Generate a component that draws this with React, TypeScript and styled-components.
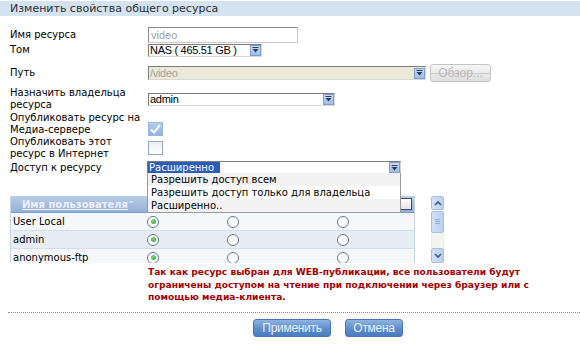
import styled, { createGlobalStyle } from "styled-components";

const GlobalStyle = createGlobalStyle`
  body {
    margin: 0;
    background: #ffffff;
    font-family: "DejaVu Sans", Verdana, sans-serif;
  }
`;

const Page = styled.div`
  width: 580px;
  height: 347px;
  overflow: hidden;
`;

const TitleBar = styled.div`
  margin-top: 1px;
  height: 15px;
  padding-left: 10px;
  background: #d4e3ef;
  font-size: 11px;
  line-height: 15px;
  color: #2e2e2e;
`;

const Form = styled.div`
  margin-top: 10px;
  padding-left: 10px;
`;

const Row = styled.div<{ $h: number; $mt?: number; $align?: string }>`
  display: flex;
  align-items: ${(p) => p.$align || "center"};
  height: ${(p) => p.$h}px;
  margin-top: ${(p) => p.$mt || 0}px;
`;

const Label = styled.div`
  width: 138px;
  flex: none;
  font-size: 10px;
  line-height: 12px;
  color: #000000;
`;

const TextInput = styled.div<{ $w: number }>`
  box-sizing: border-box;
  width: ${(p) => p.$w}px;
  height: 16px;
  padding-left: 2px;
  border: 1px solid #c8c8c8;
  border-top-color: #8a8a8a;
  border-left-color: #8a8a8a;
  font-family: "Liberation Sans", Arial, sans-serif;
  font-size: 11px;
  line-height: 14px;
  color: #a0a0a0;
`;

const SelectBox = styled.div<{ $w: number; $h?: number; $bg?: string; $mute?: boolean }>`
  position: relative;
  box-sizing: border-box;
  display: flex;
  align-items: center;
  width: ${(p) => p.$w}px;
  height: ${(p) => p.$h || 14}px;
  border: 1px solid #d8d8d8;
  border-top-color: #7c7c7c;
  border-left-color: #7c7c7c;
  background: ${(p) => p.$bg || "#ffffff"};
  font-family: "Liberation Sans", Arial, sans-serif;
  font-size: 11px;
  color: ${(p) => (p.$mute ? "#a0a0a0" : "#000000")};
`;

const SelectText = styled.span`
  flex: 1;
  padding-left: 1px;
  white-space: nowrap;
  overflow: hidden;
  letter-spacing: -0.3px;
`;

const ArrowBtn = styled.span`
  flex: none;
  box-sizing: border-box;
  width: 11px;
  height: 11px;
  display: flex;
  align-items: center;
  justify-content: center;
  background: linear-gradient(#c9dbf3, #9fbde6);
  border: 1px solid #7d9dcb;
`;

const Arrow = () => (
  <ArrowBtn>
    <svg width="7" height="6" viewBox="0 0 7 6">
      <rect x="0.5" y="0" width="6" height="1" fill="#2b3d5c" />
      <path d="M0.5 2 L6.5 2 L3.5 5.5 Z" fill="#2b3d5c" />
    </svg>
  </ArrowBtn>
);

const BrowseBtn = styled.div`
  box-sizing: border-box;
  width: 61px;
  height: 18px;
  margin-left: 4px;
  border: 1px solid #c4c4c4;
  border-radius: 3px;
  background: linear-gradient(
      transparent 8px,
      #c9c9c9 8px,
      #c9c9c9 9px,
      transparent 9px
    ),
    linear-gradient(#f6f6f6, #dedede);
  font-family: "Liberation Sans", Arial, sans-serif;
  font-size: 12px;
  line-height: 16px;
  text-align: center;
  color: #b8b8b8;
`;

const Check = styled.div<{ $on?: boolean }>`
  box-sizing: border-box;
  width: 15px;
  height: 14px;
  display: flex;
  align-items: center;
  justify-content: center;
  border: 1px solid ${(p) => (p.$on ? "#9db8e0" : "#90a8cb")};
  background: ${(p) =>
    p.$on ? "linear-gradient(#b3ccee, #90b2e2)" : "linear-gradient(#efefef, #ffffff)"};
`;

const AccessSelect = styled.div`
  position: relative;
  box-sizing: border-box;
  display: flex;
  align-items: center;
  width: 254px;
  height: 13px;
  margin-left: -1px;
  border: 1px solid #d0d0d0;
  border-top-color: #7c7c7c;
  border-left-color: #7c7c7c;
  background: #ffffff;
  font-size: 10px;
`;

const Highlight = styled.span`
  flex: none;
  padding: 0 6px 0 1px;
  line-height: 11px;
  background: #2a5cbb;
  color: #ffffff;
`;

const Spacer = styled.span`
  flex: 1;
`;

const DropList = styled.div`
  position: absolute;
  top: 11px;
  left: -1px;
  width: 254px;
  box-sizing: border-box;
  border: 1px solid #9a9a9a;
  border-top: none;
  background: #ffffff;
  z-index: 5;
`;

const DropItem = styled.div<{ $alt?: boolean }>`
  height: 13px;
  padding-left: 3px;
  font-size: 10px;
  line-height: 13px;
  color: #000000;
  background: ${(p) => (p.$alt ? "#f2f2f2" : "#ffffff")};
  white-space: nowrap;
`;

const TableArea = styled.div`
  display: flex;
  margin-top: 22px;
  padding-left: 10px;
  height: 67px;
`;

const Viewport = styled.div`
  width: 405px;
  height: 67px;
  overflow: hidden;
  border-left: 1px solid #c6d3e2;
  border-right: 1px solid #c6d3e2;
  box-sizing: border-box;
`;

const Grid = styled.div`
  display: grid;
  grid-template-columns: 129px 80px 110px 1fr;
`;

const HeadCell = styled.div`
  height: 16px;
  display: flex;
  align-items: center;
  padding-left: 11px;
  background: linear-gradient(#b9cde6, #93b1d6);
  border-bottom: 1px solid #7d9cc5;
  font-size: 10px;
  font-weight: bold;
  color: #eef0fb;
  white-space: nowrap;
  overflow: hidden;
  position: relative;

  a {
    color: inherit;
    text-decoration: underline;
  }
  sup {
    font-size: 7px;
  }
`;

/* column titles sit under the open drop-down: only their underline shows */
const HeadLine = styled.span<{ $w: number }>`
  align-self: flex-end;
  margin-bottom: 2px;
  width: ${(p) => p.$w}px;
  border-bottom: 1px dashed #eef0fb;
`;

const HeadBox = styled.span`
  position: absolute;
  right: 2px;
  top: 2px;
  width: 12px;
  height: 12px;
  box-sizing: border-box;
  border: 1px solid #3f4a5a;
  background: linear-gradient(#ffffff, #e4e4e4);
`;

const Cell = styled.div<{ $alt?: boolean; $radio?: boolean }>`
  height: 18px;
  box-sizing: border-box;
  display: flex;
  align-items: center;
  padding-left: ${(p) => (p.$radio ? "7px" : "2px")};
  background: ${(p) => (p.$alt ? "#e7edf4" : "#f5f8fb")};
  border-bottom: 1px solid #d4dde8;
  font-size: 10px;
  color: #000000;
  white-space: nowrap;
`;

const Radio = styled.span<{ $on?: boolean }>`
  width: 12px;
  height: 12px;
  box-sizing: border-box;
  border-radius: 50%;
  border: 1.5px solid #56799f;
  background: #ffffff;
  display: flex;
  align-items: center;
  justify-content: center;

  &::after {
    content: "";
    display: ${(p) => (p.$on ? "block" : "none")};
    width: 5px;
    height: 5px;
    border-radius: 50%;
    background: radial-gradient(circle at 40% 40%, #7fdb6f, #26a32a);
  }
`;

const ScrollBar = styled.div`
  display: flex;
  flex-direction: column;
  width: 13px;
  margin-left: 16px;
  height: 67px;
`;

const ScrollBtn = styled.div<{ $h: number }>`
  box-sizing: border-box;
  height: ${(p) => p.$h}px;
  display: flex;
  align-items: center;
  justify-content: center;
  border: 1px solid #a7c0e2;
  border-radius: 2px;
  background: linear-gradient(90deg, #d3e2f7, #b9d0f0);
`;

const Thumb = styled(ScrollBtn)`
  margin-top: 1px;
`;

const Track = styled.div`
  flex: 1;
  background: #f4f4f2;
  border-left: 1px solid #ececec;
  border-right: 1px solid #ececec;
`;

const Note = styled.div`
  margin: 3px 0 0 148px;
  font-size: 9.1px;
  font-weight: bold;
  line-height: 12.5px;
  color: #a50000;
  white-space: nowrap;
`;

const Divider = styled.div`
  margin: 8px 0 0 8px;
  border-top: 1px dotted #8c8c8c;
`;

const Buttons = styled.div`
  display: flex;
  gap: 14px;
  margin-top: 6px;
  padding-left: 253px;
`;

const Btn = styled.div<{ $w: number }>`
  box-sizing: border-box;
  width: ${(p) => p.$w}px;
  height: 18px;
  border: 1px solid #4a77b3;
  border-radius: 3px;
  background: linear-gradient(#8fb3e2, #5d8ccb 55%, #4a7cc0);
  font-family: "Liberation Sans", Arial, sans-serif;
  font-size: 12px;
  line-height: 16px;
  letter-spacing: -0.3px;
  text-align: center;
  color: #e9f0fb;
`;

const users = [
  { name: "User Local", alt: false },
  { name: "admin", alt: true },
  { name: "anonymous-ftp", alt: false },
];

export default function App() {
  return (
    <Page>
      <GlobalStyle />
      <TitleBar>Изменить свойства общего ресурса</TitleBar>
      <Form>
        <Row $h={17}>
          <Label>Имя ресурса</Label>
          <TextInput $w={150}>video</TextInput>
        </Row>
        <Row $h={14}>
          <Label>Том</Label>
          <SelectBox $w={114} $h={13}>
            <SelectText>NAS ( 465.51 GB )</SelectText>
            <Arrow />
          </SelectBox>
        </Row>
        <Row $h={22} $mt={5}>
          <Label>Путь</Label>
          <SelectBox $w={278} $bg="#ece9d8" $mute>
            <SelectText>/video</SelectText>
            <Arrow />
          </SelectBox>
          <BrowseBtn>Обзор...</BrowseBtn>
        </Row>
        <Row $h={26} $mt={2}>
          <Label>
            Назначить владельца
            <br />
            ресурса
          </Label>
          <SelectBox $w={187} $h={13}>
            <SelectText>admin</SelectText>
            <Arrow />
          </SelectBox>
        </Row>
        <Row $h={24} $align="flex-end">
          <Label>
            Опубликовать ресурс на
            <br />
            Медиа-сервере
          </Label>
          <Check $on>
            <svg width="11" height="10" viewBox="0 0 11 10">
              <path d="M1 5.5 L4 8.5 L10 1" stroke="#ffffff" strokeWidth="2" fill="none" />
            </svg>
          </Check>
        </Row>
        <Row $h={24}>
          <Label>
            Опубликовать этот
            <br />
            ресурс в Интернет
          </Label>
          <Check />
        </Row>
        <Row $h={13} $mt={1}>
          <Label>Доступ к ресурсу</Label>
          <AccessSelect>
            <Highlight>Расширенно</Highlight>
            <Spacer />
            <Arrow />
            <DropList>
              <DropItem $alt>Разрешить доступ всем</DropItem>
              <DropItem>Разрешить доступ только для владельца</DropItem>
              <DropItem $alt>Расширенно..</DropItem>
            </DropList>
          </AccessSelect>
        </Row>
      </Form>
      <TableArea>
        <Viewport>
          <Grid>
            <HeadCell>
              <a>Имя пользователя</a>
              <sup>^</sup>
            </HeadCell>
            <HeadCell>
              <HeadLine $w={55} />
            </HeadCell>
            <HeadCell>
              <HeadLine $w={65} />
            </HeadCell>
            <HeadCell>
              <HeadLine $w={50} />
              <HeadBox />
            </HeadCell>
            {users.map((u) => (
              <>
                <Cell key={u.name} $alt={u.alt}>
                  {u.name}
                </Cell>
                <Cell $alt={u.alt} $radio>
                  <Radio $on />
                </Cell>
                <Cell $alt={u.alt} $radio>
                  <Radio />
                </Cell>
                <Cell $alt={u.alt} $radio>
                  <Radio />
                </Cell>
              </>
            ))}
          </Grid>
        </Viewport>
        <ScrollBar>
          <ScrollBtn $h={14}>
            <svg width="8" height="6" viewBox="0 0 8 6">
              <path d="M1 5 L4 2 L7 5" stroke="#3e5a86" strokeWidth="1.6" fill="none" />
            </svg>
          </ScrollBtn>
          <Thumb $h={22}>
            <svg width="7" height="8" viewBox="0 0 7 8">
              <path d="M1 1.5 H6 M1 3.5 H6 M1 5.5 H6" stroke="#8eaedc" strokeWidth="1" />
            </svg>
          </Thumb>
          <Track />
          <ScrollBtn $h={15}>
            <svg width="8" height="6" viewBox="0 0 8 6">
              <path d="M1 1 L4 4 L7 1" stroke="#3e5a86" strokeWidth="1.6" fill="none" />
            </svg>
          </ScrollBtn>
        </ScrollBar>
      </TableArea>
      <Note>
        Так как ресурс выбран для WEB-публикации, все пользователи будут
        <br />
        ограничены доступом на чтение при подключении через браузер или с
        <br />
        помощью медиа-клиента.
      </Note>
      <Divider />
      <Buttons>
        <Btn $w={78}>Применить</Btn>
        <Btn $w={58}>Отмена</Btn>
      </Buttons>
    </Page>
  );
}
